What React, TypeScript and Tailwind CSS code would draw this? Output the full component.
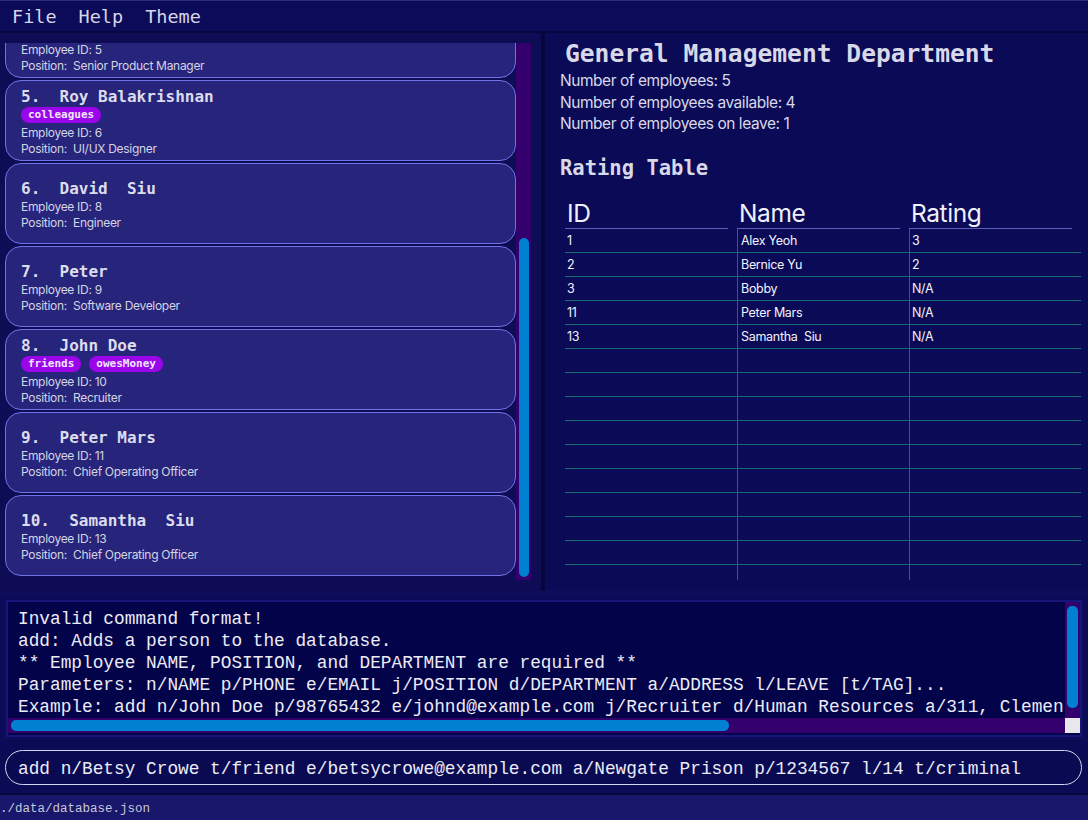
import React from 'react';

// --- DATA ---
// card 4 is scrolled half out of view: only its last two lines show
const PERSONS = [
  { no: 4, name: '', tags: ['-'], id: 5, position: 'Senior Product Manager', hidden: true },
  { no: 5, name: 'Roy Balakrishnan', tags: ['colleagues'], id: 6, position: 'UI/UX Designer' },
  { no: 6, name: 'David  Siu', tags: [], id: 8, position: 'Engineer' },
  { no: 7, name: 'Peter', tags: [], id: 9, position: 'Software Developer' },
  { no: 8, name: 'John Doe', tags: ['friends', 'owesMoney'], id: 10, position: 'Recruiter' },
  { no: 9, name: 'Peter Mars', tags: [], id: 11, position: 'Chief Operating Officer' },
  { no: 10, name: 'Samantha  Siu', tags: [], id: 13, position: 'Chief Operating Officer' },
];

const RATINGS = [
  { id: '1', name: 'Alex Yeoh', rating: '3' },
  { id: '2', name: 'Bernice Yu', rating: '2' },
  { id: '3', name: 'Bobby', rating: 'N/A' },
  { id: '11', name: 'Peter Mars', rating: 'N/A' },
  { id: '13', name: 'Samantha  Siu', rating: 'N/A' },
];

const RESULT_LINES = [
  'Invalid command format!',
  'add: Adds a person to the database.',
  '** Employee NAME, POSITION, and DEPARTMENT are required **',
  'Parameters: n/NAME p/PHONE e/EMAIL j/POSITION d/DEPARTMENT a/ADDRESS l/LEAVE [t/TAG]...',
  'Example: add n/John Doe p/98765432 e/johnd@example.com j/Recruiter d/Human Resources a/311, Clementi Ave 2, #02-25 l/14 t/friends t/owesMoney',
];

type Person = (typeof PERSONS)[number] & { hidden?: boolean };

function PersonCard({ p }: { p: Person }) {
  return (
    <div className="h-[81px] mb-[2px] shrink-0 rounded-[16px] border border-[#6f73e4] bg-[#27247b] pl-[15px] pt-[3px] flex flex-col justify-center">
      {p.hidden ? (
        <div className="h-[37px]" />
      ) : (
        <>
          <div className="font-['DejaVu_Sans_Mono',monospace] font-bold text-[16px] leading-[19px] text-[#dcdcec] whitespace-pre">
            {p.no}.  {p.name}
          </div>
          {p.tags.length > 0 && (
            <div className="flex gap-[8px] h-[18px] items-center">
              {p.tags.map((t) => (
                <span
                  key={t}
                  className="h-[16px] px-[7px] rounded-[8px] bg-[#9a05ea] text-[#f2e6ff] font-['DejaVu_Sans_Mono',monospace] font-bold text-[11px] leading-[16px]"
                >
                  {t}
                </span>
              ))}
            </div>
          )}
        </>
      )}
      <div className="font-['Inter',sans-serif] text-[12px] leading-[17px] tracking-[-0.3px] text-[#d4d4e4]">
        Employee ID: {p.id}
      </div>
      <div className="font-['Inter',sans-serif] text-[12px] leading-[16px] tracking-[-0.3px] text-[#d4d4e4]">
        Position:&nbsp; {p.position}
      </div>
    </div>
  );
}

export default function App() {
  return (
    <div className="w-[1088px] h-[820px] overflow-hidden bg-[#0a0a55] flex flex-col">
      {/* menu */}
      <div className="h-[33px] shrink-0 bg-[#0b0b5a] border-t border-[#2a2a80] border-b-2 border-b-[#07073f] flex items-center pl-[12px] gap-[22px] font-['DejaVu_Sans_Mono',monospace] text-[18.5px] leading-[24px] text-[#d6d6e6]">
        <span className="pt-[2px]">File</span>
        <span className="pt-[2px]">Help</span>
        <span className="pt-[2px]">Theme</span>
      </div>

      {/* main split */}
      <div className="h-[558px] shrink-0 flex">
        {/* person list */}
        <div className="w-[541px] shrink-0 bg-[#0d0c55] pt-[10px] pl-[5px] pb-[11px]">
          <div className="h-[537px] w-[526px] flex">
            <div className="w-[511px] h-full overflow-hidden">
              <div className="-mt-[46px] flex flex-col">
                {PERSONS.map((p) => (
                  <PersonCard key={p.no} p={p} />
                ))}
              </div>
            </div>
            <div className="w-[15px] h-full bg-[#33006e] flex flex-col justify-end items-center pb-[3px]">
              <div className="w-[10px] h-[339px] rounded-[5px] bg-[#0080d0]" />
            </div>
          </div>
        </div>
        <div className="w-[4px] shrink-0 bg-[#06063c]" />

        {/* department */}
        <div className="flex-1 bg-[#0a0a56] pt-[6px] pl-[15px]">
          <div className="pl-[5px] font-['DejaVu_Sans_Mono',monospace] font-bold text-[24.6px] leading-[30px] text-[#d8d8e8]">
            General Management Department
          </div>
          <div className="pt-[1px] font-['Inter',sans-serif] text-[15.5px] leading-[21.5px] tracking-[-0.45px] text-[#d8d8e8]">
            <div>Number of employees: 5</div>
            <div>Number of employees available: 4</div>
            <div>Number of employees on leave: 1</div>
          </div>
          <div className="mt-[20px] font-['DejaVu_Sans_Mono',monospace] font-bold text-[20.5px] leading-[26px] text-[#d8d8e8]">
            Rating Table
          </div>

          <div className="mt-[18px] ml-[5px] w-[516px] font-['Inter',sans-serif]">
            <div className="grid grid-cols-3 h-[30px]">
              {['ID', 'Name', 'Rating'].map((h) => (
                <div key={h} className="mr-[9px] border-b border-[#5d5dbd] pl-[2px] text-[24.5px] leading-[28px] tracking-[-0.4px] text-[#f0f0fa]">
                  {h}
                </div>
              ))}
            </div>
            <div className="h-[351px] overflow-hidden">
              {Array.from({ length: 15 }).map((_, i) => {
                const r = RATINGS[i];
                return (
                  <div key={i} className="grid grid-cols-3 h-[24px] border-b border-[#1a6a72] text-[12.5px] leading-[23px] tracking-[-0.3px] text-[#f2f2fc]">
                    <div className="pl-[2px]">{r?.id}</div>
                    <div className="pl-[3px] border-l border-[#1a6a72] whitespace-pre">{r?.name}</div>
                    <div className="pl-[2px] border-l border-[#1a6a72]">{r?.rating}</div>
                  </div>
                );
              })}
            </div>
          </div>
        </div>
      </div>

      {/* result display */}
      <div className="h-[150px] shrink-0 bg-[#0c0b58] border-t-[6px] border-[#0e0d5c] pt-[3px] px-[6px]">
        <div className="h-[137px] border-2 border-[#15157a] bg-[#03034a] flex flex-col">
          <div className="flex h-[116px]">
            <div className="flex-1 overflow-hidden pl-[10px] pt-[6px] font-['Liberation_Mono','DejaVu_Sans_Mono',monospace] text-[17.8px] leading-[22px] text-[#ececf6] whitespace-pre">
              {RESULT_LINES.map((l) => (
                <div key={l}>{l}</div>
              ))}
            </div>
            <div className="w-[15px] bg-[#33006e] pt-[4px] flex justify-center">
              <div className="w-[11px] h-[102px] rounded-[5px] bg-[#0080d0]" />
            </div>
          </div>
          <div className="flex h-[15px]">
            <div className="flex-1 bg-[#33006e] pl-[3px] flex items-center">
              <div className="w-[718px] h-[11px] rounded-[5px] bg-[#0080d0]" />
            </div>
            <div className="w-[15px] bg-[#e8e8ec]" />
          </div>
        </div>
      </div>

      {/* command box */}
      <div className="h-[52px] shrink-0 bg-[#0b0b55] pt-[9px] pl-[5px] pr-[6px]">
        <div className="h-[35px] rounded-full border-[1.5px] border-[#d4d4ee] bg-[#0a0a52] pl-[12px] pt-[3px] flex items-center font-['Liberation_Mono','DejaVu_Sans_Mono',monospace] text-[17.8px] text-[#ececf6] whitespace-pre">
          add n/Betsy Crowe t/friend e/betsycrowe@example.com a/Newgate Prison p/1234567 l/14 t/criminal
        </div>
      </div>

      {/* status bar */}
      <div className="flex-1 bg-[#18176c] border-t-2 border-[#07073f] flex items-center pt-[3px] font-['Liberation_Mono','DejaVu_Sans_Mono',monospace] text-[12.5px] text-[#c8c8d8]">
        ./data/database.json
      </div>
    </div>
  );
}
